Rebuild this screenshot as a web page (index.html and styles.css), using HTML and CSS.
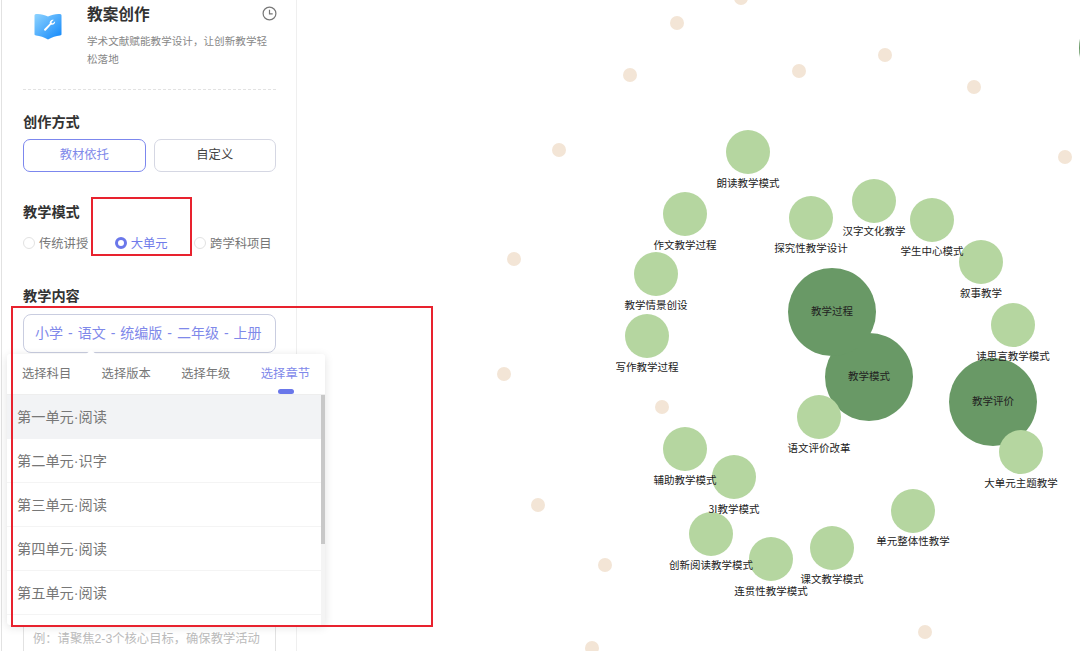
FILE: index.html
```html
<!DOCTYPE html>
<html>
<head>
    <meta charset="utf-8">
    <title>教案创作</title>
    <link rel="stylesheet" href="styles.css">
</head>
<body>
    <div class="sidebar">
        <div class="head">
            <svg class="head-icon" width="28" height="27" viewBox="0 0 28 27">
                <defs>
                    <linearGradient id="bookFill" x1="0" y1="0" x2="1" y2="1">
                        <stop offset="0" stop-color="#8fd4ff"/>
                        <stop offset="1" stop-color="#0f86fa"/>
                    </linearGradient>
                </defs>
                <path d="M2 1C6 .6 10 1.6 14 3.4C18 1.6 22 .6 26 1C27 1.100 27.500 1.800 27.500 2.800V21C27.500 22 27 22.400 26 22.500C22 23 18 24.300 14 26.500C10 24.300 6 23 2 22.500C1 22.400 .5 22 .5 21V2.800C.5 1.800 1 1.100 2 1Z" fill="url(#bookFill)"/>
                <path d="M19.800 6.800L17.300 9.200L18.700 10.600L21.100 8.200C21.500 10.300 19.400 12.400 17 11.700L11.800 17.500C10.900 18.500 9.400 17.100 10.300 16.100L15.800 10.500C15.200 8.200 17.600 6.100 19.800 6.800Z" fill="#fff"/>
            </svg>
            <div class="head-text">
                <div class="head-title">
                    <span>教案创作</span>
                    <svg class="clock" width="15" height="15" viewBox="0 0 15 15">
                        <circle cx="7.500" cy="7.500" r="6.400" fill="none" stroke="#777" stroke-width="1.200"/>
                        <path d="M7.500 3.800V7.900H10.700" fill="none" stroke="#777" stroke-width="1.200"/>
                    </svg>
                </div>
                <p class="head-desc">学术文献赋能教学设计，让创新教学轻松落地</p>
            </div>
        </div>

        <h3 class="section-title first">创作方式</h3>
        <div class="mode-buttons">
            <div class="mode-btn active">教材依托</div>
            <div class="mode-btn">自定义</div>
        </div>

        <h3 class="section-title second">教学模式</h3>
        <div class="radio-row">
            <div class="radio"><i></i>传统讲授</div>
            <div class="radio checked"><i></i>大单元</div>
            <div class="radio"><i></i>跨学科项目</div>
        </div>

        <h3 class="section-title third">教学内容</h3>
        <div class="select-box">小学 - 语文 - 统编版 - 二年级 - 上册</div>
        <div class="goal-box">例：请聚焦2-3个核心目标，确保教学活动</div>

        <div class="popup">
            <div class="tabs">
                <span>选择科目</span>
                <span>选择版本</span>
                <span>选择年级</span>
                <span class="tab-on">选择章节</span>
            </div>
            <div class="popup-body">
                <ul class="unit-list">
                    <li class="hover">第一单元·阅读</li>
                    <li>第二单元·识字</li>
                    <li>第三单元·阅读</li>
                    <li>第四单元·阅读</li>
                    <li>第五单元·阅读</li>
                </ul>
                <div class="scroll-track"><div class="scroll-thumb"></div></div>
            </div>
        </div>
    </div>

    <div class="graph-wrap">
        <svg class="graph" width="783" height="651" viewBox="297 0 783 651">
            <g class="dots">
                <circle cx="677" cy="23" r="7"/>
                <circle cx="741" cy="-2" r="7"/>
                <circle cx="885" cy="55" r="7"/>
                <circle cx="799" cy="71" r="7"/>
                <circle cx="630" cy="75" r="7"/>
                <circle cx="974" cy="87" r="7"/>
                <circle cx="559" cy="150" r="7"/>
                <circle cx="1065" cy="157" r="7"/>
                <circle cx="514" cy="259" r="7"/>
                <circle cx="504" cy="374" r="7"/>
                <circle cx="662" cy="407" r="7"/>
                <circle cx="538" cy="505" r="7"/>
                <circle cx="605" cy="565" r="7"/>
                <circle cx="925" cy="632" r="7"/>
                <circle cx="592" cy="648" r="7"/>
            </g>
            <g class="big">
                <circle cx="1123" cy="48" r="44"/>
                <circle cx="869" cy="377" r="44"/>
                <circle cx="832" cy="312" r="44"/>
                <circle cx="993" cy="402" r="44"/>
            </g>
            <g class="small">
                <circle cx="748" cy="152" r="22"/>
                <circle cx="685" cy="214" r="22"/>
                <circle cx="811" cy="218" r="22"/>
                <circle cx="874" cy="201" r="22"/>
                <circle cx="932" cy="220" r="22"/>
                <circle cx="981" cy="262" r="22"/>
                <circle cx="1013" cy="325" r="22"/>
                <circle cx="656" cy="274" r="22"/>
                <circle cx="647" cy="336" r="22"/>
                <circle cx="819" cy="417" r="22"/>
                <circle cx="685" cy="449" r="22"/>
                <circle cx="734" cy="477" r="22"/>
                <circle cx="711" cy="534" r="22"/>
                <circle cx="771" cy="559" r="22"/>
                <circle cx="832" cy="548" r="22"/>
                <circle cx="913" cy="511" r="22"/>
                <circle cx="1021" cy="452" r="22"/>
            </g>
            <g class="labels">
                <text x="832" y="315">教学过程</text>
                <text x="869" y="380">教学模式</text>
                <text x="993" y="405">教学评价</text>
                <text x="748" y="187">朗读教学模式</text>
                <text x="685" y="249">作文教学过程</text>
                <text x="811" y="252">探究性教学设计</text>
                <text x="874" y="235">汉字文化教学</text>
                <text x="932" y="255">学生中心模式</text>
                <text x="981" y="297">叙事教学</text>
                <text x="1013" y="360">读思言教学模式</text>
                <text x="656" y="309">教学情景创设</text>
                <text x="647" y="371">写作教学过程</text>
                <text x="819" y="452">语文评价改革</text>
                <text x="685" y="484">辅助教学模式</text>
                <text x="734" y="513">3I教学模式</text>
                <text x="711" y="569">创新阅读教学模式</text>
                <text x="771" y="595">连贯性教学模式</text>
                <text x="832" y="583">课文教学模式</text>
                <text x="913" y="545">单元整体性教学</text>
                <text x="1021" y="487">大单元主题教学</text>
            </g>
        </svg>
    </div>

    <div class="red-box box-radio"></div>
    <div class="red-box box-popup"></div>
</body>
</html>
```
FILE: styles.css
```css
body {
    margin: 0;
    height: 651px;
    overflow: hidden;
    display: flex;
    background-color: white;
    font-family: "Liberation Sans", "Noto Sans CJK SC", sans-serif;
    position: relative;
}

.sidebar {
    position: relative;
    z-index: 1;
    box-sizing: border-box;
    width: 296px;
    height: 651px;
    margin-left: 1px;
    padding: 3px 20px 0 21px;
    border-left: 1px solid #e2e2e2;
    border-right: 1px solid #efefef;
    flex-shrink: 0;
}

.head {
    display: flex;
    gap: 25px;
    padding: 0 0 21px 11px;
    border-bottom: 1px dashed #e2e2e2;
}

.head-icon {
    margin-top: 10px;
    flex-shrink: 0;
}

.head-text {
    flex: 1;
}

.head-title {
    display: flex;
    justify-content: space-between;
    align-items: center;
    height: 20px;
    font-size: 15.700px;
    font-weight: bold;
    color: #333;
}

.clock {
    margin-right: -1px;
}

.head-desc {
    margin: 9px 0 0;
    font-size: 10.600px;
    line-height: 18px;
    color: #888;
}

.section-title {
    margin: 0;
    font-size: 14.200px;
    line-height: 20px;
    font-weight: bold;
    color: #333;
}

.section-title.first {
    margin-top: 22px;
}

.section-title.second {
    margin-top: 30px;
}

.section-title.third {
    margin-top: 34px;
}

.mode-buttons {
    display: flex;
    gap: 8px;
    margin-top: 7px;
}

.mode-btn {
    flex: 1;
    height: 33px;
    box-sizing: border-box;
    border: 1px solid #d5d7e3;
    border-radius: 7px;
    font-size: 12.300px;
    line-height: 31px;
    text-align: center;
    color: #444;
}

.mode-btn.active {
    border-color: #7c87ee;
    color: #7f89ea;
}

.radio-row {
    display: flex;
    margin-top: 12px;
    height: 18px;
    align-items: center;
}

.radio {
    display: flex;
    align-items: center;
    gap: 4px;
    font-size: 12.300px;
    color: #777;
    margin-right: 26.500px;
    white-space: nowrap;
}

.radio i {
    width: 12px;
    height: 12px;
    box-sizing: border-box;
    border: 1px solid #e2e2e2;
    border-radius: 50%;
}

.radio.checked {
    color: #6f7bea;
}

.radio.checked i {
    border: 3.500px solid #6a77ea;
    background-color: white;
}

.select-box {
    margin-top: 8px;
    height: 39px;
    box-sizing: border-box;
    border: 1px solid #c9cde0;
    border-radius: 8px;
    padding-left: 11px;
    font-size: 14px;
    word-spacing: 1.100px;
    line-height: 37px;
    color: #7f89ea;
    white-space: nowrap;
}

.goal-box {
    margin-top: 272px;
    height: 26px;
    box-sizing: border-box;
    border: 1px solid #e2e2e2;
    border-bottom: none;
    padding: 4px 9px 0;
    font-size: 12.300px;
    line-height: 18px;
    color: #bbb;
    white-space: nowrap;
}

.popup {
    position: absolute;
    left: 5px;
    top: 354px;
    width: 318px;
    height: 271px;
    background-color: white;
    border-radius: 3px;
    box-shadow: 0 2px 10px rgba(0,0,0,0.12);
}

.popup::before {
    content: "";
    position: absolute;
    left: 79px;
    top: -4px;
    border-left: 5px solid transparent;
    border-right: 5px solid transparent;
    border-bottom: 4px solid white;
}

.tabs {
    display: flex;
    justify-content: space-between;
    box-sizing: border-box;
    height: 41px;
    padding: 11px 15px 0;
    border-bottom: 1px solid #eee;
    font-size: 12.300px;
    line-height: 18px;
    color: #777;
}

.tab-on {
    position: relative;
    color: #7f89ea;
}

.tab-on::after {
    content: "";
    position: absolute;
    left: 17px;
    top: 24px;
    width: 16px;
    height: 5px;
    border-radius: 3px;
    background-color: #6a77ea;
}

.popup-body {
    display: flex;
    height: 230px;
    overflow: hidden;
}

.unit-list {
    flex: 1;
    margin: 0;
    padding: 0;
    list-style: none;
}

.unit-list li {
    box-sizing: border-box;
    height: 44px;
    padding-left: 10px;
    border-bottom: 1px solid #f4f4f4;
    font-size: 14.200px;
    line-height: 44px;
    color: #777;
}

.unit-list li.hover {
    background-color: #f2f3f5;
    border-bottom: none;
}

.scroll-track {
    width: 4px;
    background-color: #f4f4f4;
}

.scroll-thumb {
    height: 149px;
    background-color: #c8c8c8;
}

.graph-wrap {
    flex: 1;
    overflow: hidden;
}

.graph {
    display: block;
}

.dots circle {
    fill: #f3e5d6;
}

.big circle {
    fill: #699966;
}

.small circle {
    fill: #b5d6a0;
}

.labels text {
    font-family: "Noto Sans CJK SC", sans-serif;
    font-size: 10.500px;
    fill: #222;
    text-anchor: middle;
}

.red-box {
    position: absolute;
    z-index: 2;
    box-sizing: border-box;
    border: 2px solid #e8222e;
}

.box-radio {
    left: 91px;
    top: 197px;
    width: 101px;
    height: 59px;
}

.box-popup {
    left: 11px;
    top: 306px;
    width: 422px;
    height: 321px;
}
```
